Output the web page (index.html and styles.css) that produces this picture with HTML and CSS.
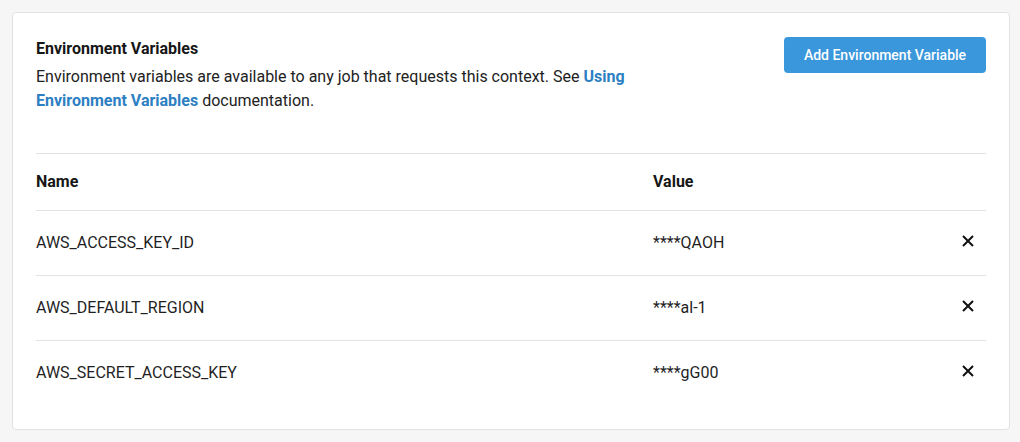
FILE: index.html
```html
<!DOCTYPE html>
<html>
<head>
<meta charset="utf-8">
<link rel="stylesheet" href="styles.css">
</head>
<body>
<div class="card">
  <div class="head">
    <div class="intro">
      <h2 class="title">Environment Variables</h2>
      <p class="desc">Environment variables are available to any job that requests this context. See <a class="link" href="#">Using Environment Variables</a> documentation.</p>
    </div>
    <button class="btn">Add Environment Variable</button>
  </div>
  <div class="table">
    <div class="row header">
      <div class="cell">Name</div>
      <div class="cell">Value</div>
      <div class="cell"></div>
    </div>
    <div class="row">
      <div class="cell">AWS_ACCESS_KEY_ID</div>
      <div class="cell">****QAOH</div>
      <div class="cell act"><svg class="x" viewBox="0 0 12 12"><path d="M1 1L11 11M11 1L1 11"/></svg></div>
    </div>
    <div class="row">
      <div class="cell">AWS_DEFAULT_REGION</div>
      <div class="cell">****al-1</div>
      <div class="cell act"><svg class="x" viewBox="0 0 12 12"><path d="M1 1L11 11M11 1L1 11"/></svg></div>
    </div>
    <div class="row last">
      <div class="cell">AWS_SECRET_ACCESS_KEY</div>
      <div class="cell">****gG00</div>
      <div class="cell act"><svg class="x" viewBox="0 0 12 12"><path d="M1 1L11 11M11 1L1 11"/></svg></div>
    </div>
  </div>
</div>
</body>
</html>
```
FILE: styles.css
```css
html, body { margin: 0; padding: 0; }
body {
  background: #f6f6f6;
  font-family: Roboto, "Liberation Sans", sans-serif;
  color: #1f1f1f;
  padding: 12px 10px 12px 12px;
}
.card {
  background: #fff;
  border: 1px solid #e2e2e2;
  border-radius: 4px;
  box-sizing: border-box;
  height: 418px;
  padding: 24px 23px 24px 23px;
}
.head {
  display: flex;
  justify-content: space-between;
  align-items: flex-start;
}
.intro { width: 600px; }
.title {
  margin: 0;
  font-size: 16px;
  font-weight: 700;
  line-height: 24px;
  color: #161616;
}
.desc {
  margin: 4px 0 0;
  font-size: 16px;
  line-height: 24px;
  color: #222;
}
.link {
  color: #2d7fc3;
  font-weight: 700;
  text-decoration: none;
}
.btn {
  width: 202px;
  height: 36px;
  border: none;
  border-radius: 4px;
  background: #3a97dc;
  color: #fff;
  font-family: Roboto, "Liberation Sans", sans-serif;
  font-size: 14px;
  font-weight: 500;
  padding: 0;
}
.table {
  margin-top: 40px;
  border-top: 1px solid #e3e3e3;
}
.row {
  display: grid;
  grid-template-columns: 617px 1fr 24px;
  align-items: center;
  height: 64px;
  border-bottom: 1px solid #e3e3e3;
  font-size: 16px;
  color: #1f1f1f;
}
.row.header {
  font-weight: 700;
  color: #161616;
  padding-top: 1px;
  height: 55px;
}
.row.last { border-bottom: none; }
.cell { line-height: 20px; padding-bottom: 1px; }
.act { display: flex; justify-content: flex-start; padding-bottom: 0; }
.x {
  width: 12px;
  height: 12px;
  stroke: #111;
  stroke-width: 2;
  fill: none;
  margin-top: -5px;
}
```
